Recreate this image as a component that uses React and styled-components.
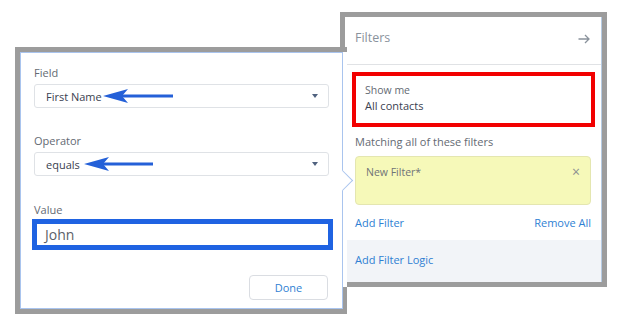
import React from 'react'
import styled, { createGlobalStyle } from 'styled-components'

const GRAY = '#9c9c9c'
const LINK = '#2f7fd3'
const LABEL = '#646a73'
const TEXT = '#3a4150'

const GlobalStyle = createGlobalStyle`
	html, body {
		margin: 0;
		padding: 0;
		background: #fff;
	}
	body {
		font-family: "Open Sans", "Liberation Sans", sans-serif;
	}
	* {
		box-sizing: border-box;
	}
`

const Stage = styled.div`
	position: relative;
	width: 624px;
	height: 329px;
	overflow: hidden;
	background: #fff;
`

/* ---------- right panel ---------- */

const FilterPanel = styled.section`
	position: absolute;
	left: 340px;
	top: 12px;
	width: 267px;
	height: 275px;
	border: 5px solid ${GRAY};
	background: #fff;
`

const PanelInner = styled.div`
	height: 100%;
	display: flex;
	flex-direction: column;
	border-right: 1px solid #b6cbe3;
	border-bottom: 1px solid #b6cbe3;
`

const PanelHeader = styled.header`
	height: 48px;
	flex: none;
	display: flex;
	align-items: center;
	justify-content: space-between;
	padding: 0 11px 6px 10px;
	border-bottom: 1px solid #e0e2e5;
	font-size: 12.5px;
	color: #8a929c;
`

const PanelBody = styled.div`
	flex: 1;
	display: flex;
	flex-direction: column;
	padding: 7px 6px 0 10px;
`

const ShowMe = styled.div`
	margin-left: -3px;
	height: 55px;
	border: 4px solid #f20000;
	padding: 7px 0 0 9px;
	display: flex;
	flex-direction: column;
	gap: 1px;
`

const SmallLabel = styled.span`
	font-size: 10.5px;
	line-height: 14px;
	color: ${LABEL};
`

const Value = styled.span`
	font-size: 11px;
	line-height: 15px;
	color: ${TEXT};
`

const SectionTitle = styled.div`
	margin-top: 7px;
	font-size: 11px;
	line-height: 16px;
	color: ${LABEL};
`

const FilterCard = styled.div`
	margin-top: 6px;
	margin-right: 4px;
	height: 49px;
	background: #f6f9b9;
	border: 1px solid #e4e6b0;
	border-radius: 4px;
	padding: 8px 10px 0 10px;
	display: flex;
	justify-content: space-between;
	align-items: flex-start;
	font-size: 10.5px;
	color: #6f7377;
`

const Close = styled.span`
	font-size: 14px;
	line-height: 14px;
	color: #8c8f92;
`

const LinkRow = styled.div`
	margin-top: 10px;
	margin-right: 4px;
	display: flex;
	justify-content: space-between;
`

const Link = styled.span`
	font-size: 11px;
	line-height: 16px;
	color: ${LINK};
`

const PanelFooter = styled.footer`
	height: 42px;
	flex: none;
	margin-top: 9px;
	background: #f2f4f8;
	display: flex;
	align-items: center;
	padding: 0 10px 2px;
`

/* ---------- left popover ---------- */

const PopoverFrame = styled.section`
	position: absolute;
	left: 15px;
	top: 47px;
	width: 332px;
	height: 267px;
	z-index: 2;
	background: ${GRAY};
	padding: 5px 0 5px 5px;

	&::before {
		content: '';
		position: absolute;
		right: 0;
		top: 5px;
		width: 4px;
		height: 235px;
		background: #fff;
	}
`

const Popover = styled.div`
	position: relative;
	width: 323px;
	height: 100%;
	background: #fff;
	border: 1px solid #a9c4ee;
	padding: 12px 13px 0 13px;
	display: flex;
	flex-direction: column;

	&::after {
		content: '';
		position: absolute;
		right: -8px;
		top: 120px;
		width: 14px;
		height: 14px;
		background: #fff;
		border-top: 1px solid #a9c4ee;
		border-right: 1px solid #a9c4ee;
		transform: rotate(45deg);
	}
`

const FieldLabel = styled.label`
	display: block;
	font-size: 11px;
	line-height: 16px;
	color: ${LABEL};
	margin-top: ${p => p.$gap || 0}px;
`

const Select = styled.div`
	position: relative;
	margin-top: 3px;
	height: 24px;
	border: 1px solid #dfe2e6;
	border-radius: 3px;
	display: flex;
	align-items: center;
	padding: 0 10px 0 11px;
	font-size: 11px;
	color: ${TEXT};
`

const SelectText = styled.span`
	flex: 1;
`

const Caret = styled.span`
	width: 0;
	height: 0;
	border-left: 3.5px solid transparent;
	border-right: 3.5px solid transparent;
	border-top: 4px solid #50627f;
`

const Pointer = styled.svg`
	position: absolute;
	left: ${p => p.$left}px;
	top: 50%;
	transform: translateY(-50%);
`

const ValueInput = styled.div`
	margin: 1px -4px 0 -2px;
	height: 31px;
	border: 5px solid #1f63e2;
	display: flex;
	align-items: center;
	padding-left: 8px;
	font-size: 14px;
	color: #5b5f68;
`

const Actions = styled.div`
	margin-top: 25px;
	display: flex;
	justify-content: flex-end;
	padding-right: 1px;
`

const Button = styled.button`
	width: 79px;
	height: 25px;
	background: #fff;
	border: 1px solid #dadde2;
	border-radius: 4px;
	font-family: inherit;
	font-size: 11px;
	color: ${LINK};
`

const CollapseIcon = () => (
	<svg width="12" height="10" viewBox="0 0 12 10" style={{ marginTop: 3 }}>
		<path d="M0.5 5H11M7 1l4 4-4 4" fill="none" stroke="#8a929c" strokeWidth="1.3" />
	</svg>
)

const BlueArrow = ({ left, length }) => (
	<Pointer $left={left} width={length} height="16" viewBox={`0 0 ${length} 16`}>
		<polygon points="0,8 25,1 19,8 25,15" fill="#2460d8" />
		<rect x="19" y="6.5" width={length - 19} height="3" fill="#2460d8" />
	</Pointer>
)

const FieldSelect = ({ value, arrowLeft, arrowLength }) => (
	<Select>
		<SelectText>{value}</SelectText>
		<BlueArrow left={arrowLeft} length={arrowLength} />
		<Caret />
	</Select>
)

const App = () => (
	<Stage>
		<GlobalStyle />

		<FilterPanel>
			<PanelInner>
				<PanelHeader>
					<span>Filters</span>
					<CollapseIcon />
				</PanelHeader>
				<PanelBody>
					<ShowMe>
						<SmallLabel>Show me</SmallLabel>
						<Value>All contacts</Value>
					</ShowMe>
					<SectionTitle>Matching all of these filters</SectionTitle>
					<FilterCard>
						<span>New Filter*</span>
						<Close>×</Close>
					</FilterCard>
					<LinkRow>
						<Link>Add Filter</Link>
						<Link>Remove All</Link>
					</LinkRow>
				</PanelBody>
				<PanelFooter>
					<Link>Add Filter Logic</Link>
				</PanelFooter>
			</PanelInner>
		</FilterPanel>

		<PopoverFrame>
			<Popover>
				<FieldLabel>Field</FieldLabel>
				<FieldSelect value="First Name" arrowLeft={68} arrowLength={70} />
				<FieldLabel $gap={25}>Operator</FieldLabel>
				<FieldSelect value="equals" arrowLeft={49} arrowLength={69} />
				<FieldLabel $gap={26}>Value</FieldLabel>
				<ValueInput>John</ValueInput>
				<Actions>
					<Button>Done</Button>
				</Actions>
			</Popover>
		</PopoverFrame>
	</Stage>
)

export default App
